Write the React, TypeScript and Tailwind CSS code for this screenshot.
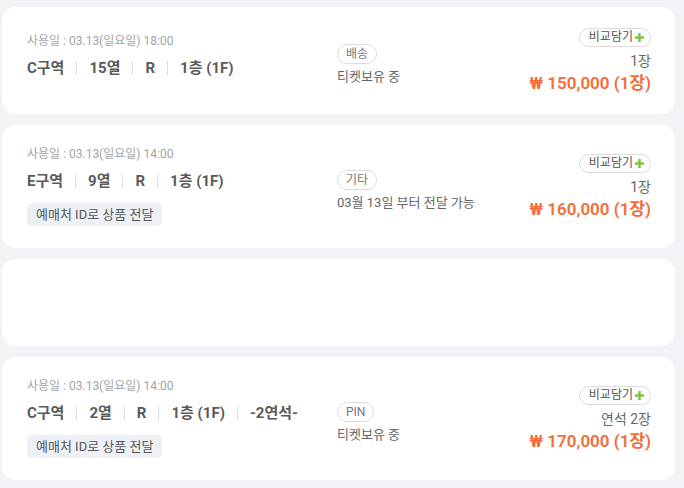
import React from 'react';

type Ticket = {
  date: string;
  seats: string[];
  delivery: string;
  deliveryNote: string;
  qty: string;
  price: string;
  idTransfer?: boolean;
  height: string;
};

const tickets: Ticket[] = [
  { date: '사용일 : 03.13(일요일) 18:00', seats: ['C구역', '15열', 'R', '1층 (1F)'], delivery: '배송', deliveryNote: '티켓보유 중', qty: '1장', price: '₩ 150,000 (1장)', height: 'h-[107px]' },
  { date: '사용일 : 03.13(일요일) 14:00', seats: ['E구역', '9열', 'R', '1층 (1F)'], delivery: '기타', deliveryNote: '03월 13일 부터 전달 가능', qty: '1장', price: '₩ 160,000 (1장)', idTransfer: true, height: 'h-[123px]' },
];

const last: Ticket = { date: '사용일 : 03.13(일요일) 14:00', seats: ['C구역', '2열', 'R', '1층 (1F)', '-2연석-'], delivery: 'PIN', deliveryNote: '티켓보유 중', qty: '연석 2장', price: '₩ 170,000 (1장)', idTransfer: true, height: 'h-[123px]' };

const TicketCard: React.FC<{ t: Ticket }> = ({ t }) => (
  <div className={`${t.height} bg-white rounded-[14px] flex items-center pl-[25px] pr-[24px]`}>
    <div className={`w-[310px] flex flex-col ${t.idTransfer ? 'pb-[2px]' : 'pb-[10px]'}`}>
      <div className="text-[12px] leading-[18px] text-[#a3a3a3]">{t.date}</div>
      <div className="flex items-center mt-[6px] text-[15px] leading-[24px] font-bold text-[#5a5a5a]">
        {t.seats.map((s, i) => (
          <React.Fragment key={i}>
            {i > 0 && <span className="w-px h-[14px] bg-[#dddddd] mx-[12px]" />}
            <span>{s}</span>
          </React.Fragment>
        ))}
      </div>
      {t.idTransfer && (
        <div className="mt-[10px] self-start h-[23px] px-[9px] flex items-center rounded-[5px] bg-[#edf1f5] text-[13px] text-[#555]">
          예매처 ID로 상품 전달
        </div>
      )}
    </div>
    <div className="flex-1 flex flex-col items-start pt-[8px]">
      <span className="h-[20px] px-[8px] flex items-center rounded-full border border-[#dcdcdc] text-[12px] text-[#777]">{t.delivery}</span>
      <span className="mt-[4px] text-[13px] leading-[18px] text-[#666]">{t.deliveryNote}</span>
    </div>
    <div className="flex flex-col items-end">
      <span className="h-[19px] pl-[9px] pr-[5px] flex items-center rounded-full border border-[#dcdcdc] text-[12px] text-[#555]">
        비교담기
        <svg width="11" height="11" viewBox="0 0 11 11" className="ml-[1px]">
          <path d="M5.5 1v9M1 5.5h9" stroke="#7cc242" strokeWidth="2.4" />
        </svg>
      </span>
      <span className="mt-[5px] text-[14px] leading-[18px] text-[#666]">{t.qty}</span>
      <span className="mt-[2px] text-[17px] leading-[22px] font-semibold text-[#f46c38]">{t.price}</span>
    </div>
  </div>
);

export default function App() {
  return (
    <div className="w-[684px] h-[488px] overflow-hidden bg-[#f2f3f7] pt-[7px] pl-[2px] pr-[9px] flex flex-col gap-[11px]" style={{ fontFamily: 'Roboto, "Noto Sans CJK KR", sans-serif' }}>
      {tickets.map((t, i) => <TicketCard key={i} t={t} />)}
      <div className="h-[87px] bg-white rounded-[14px] shrink-0" />
      <TicketCard t={last} />
    </div>
  );
}
